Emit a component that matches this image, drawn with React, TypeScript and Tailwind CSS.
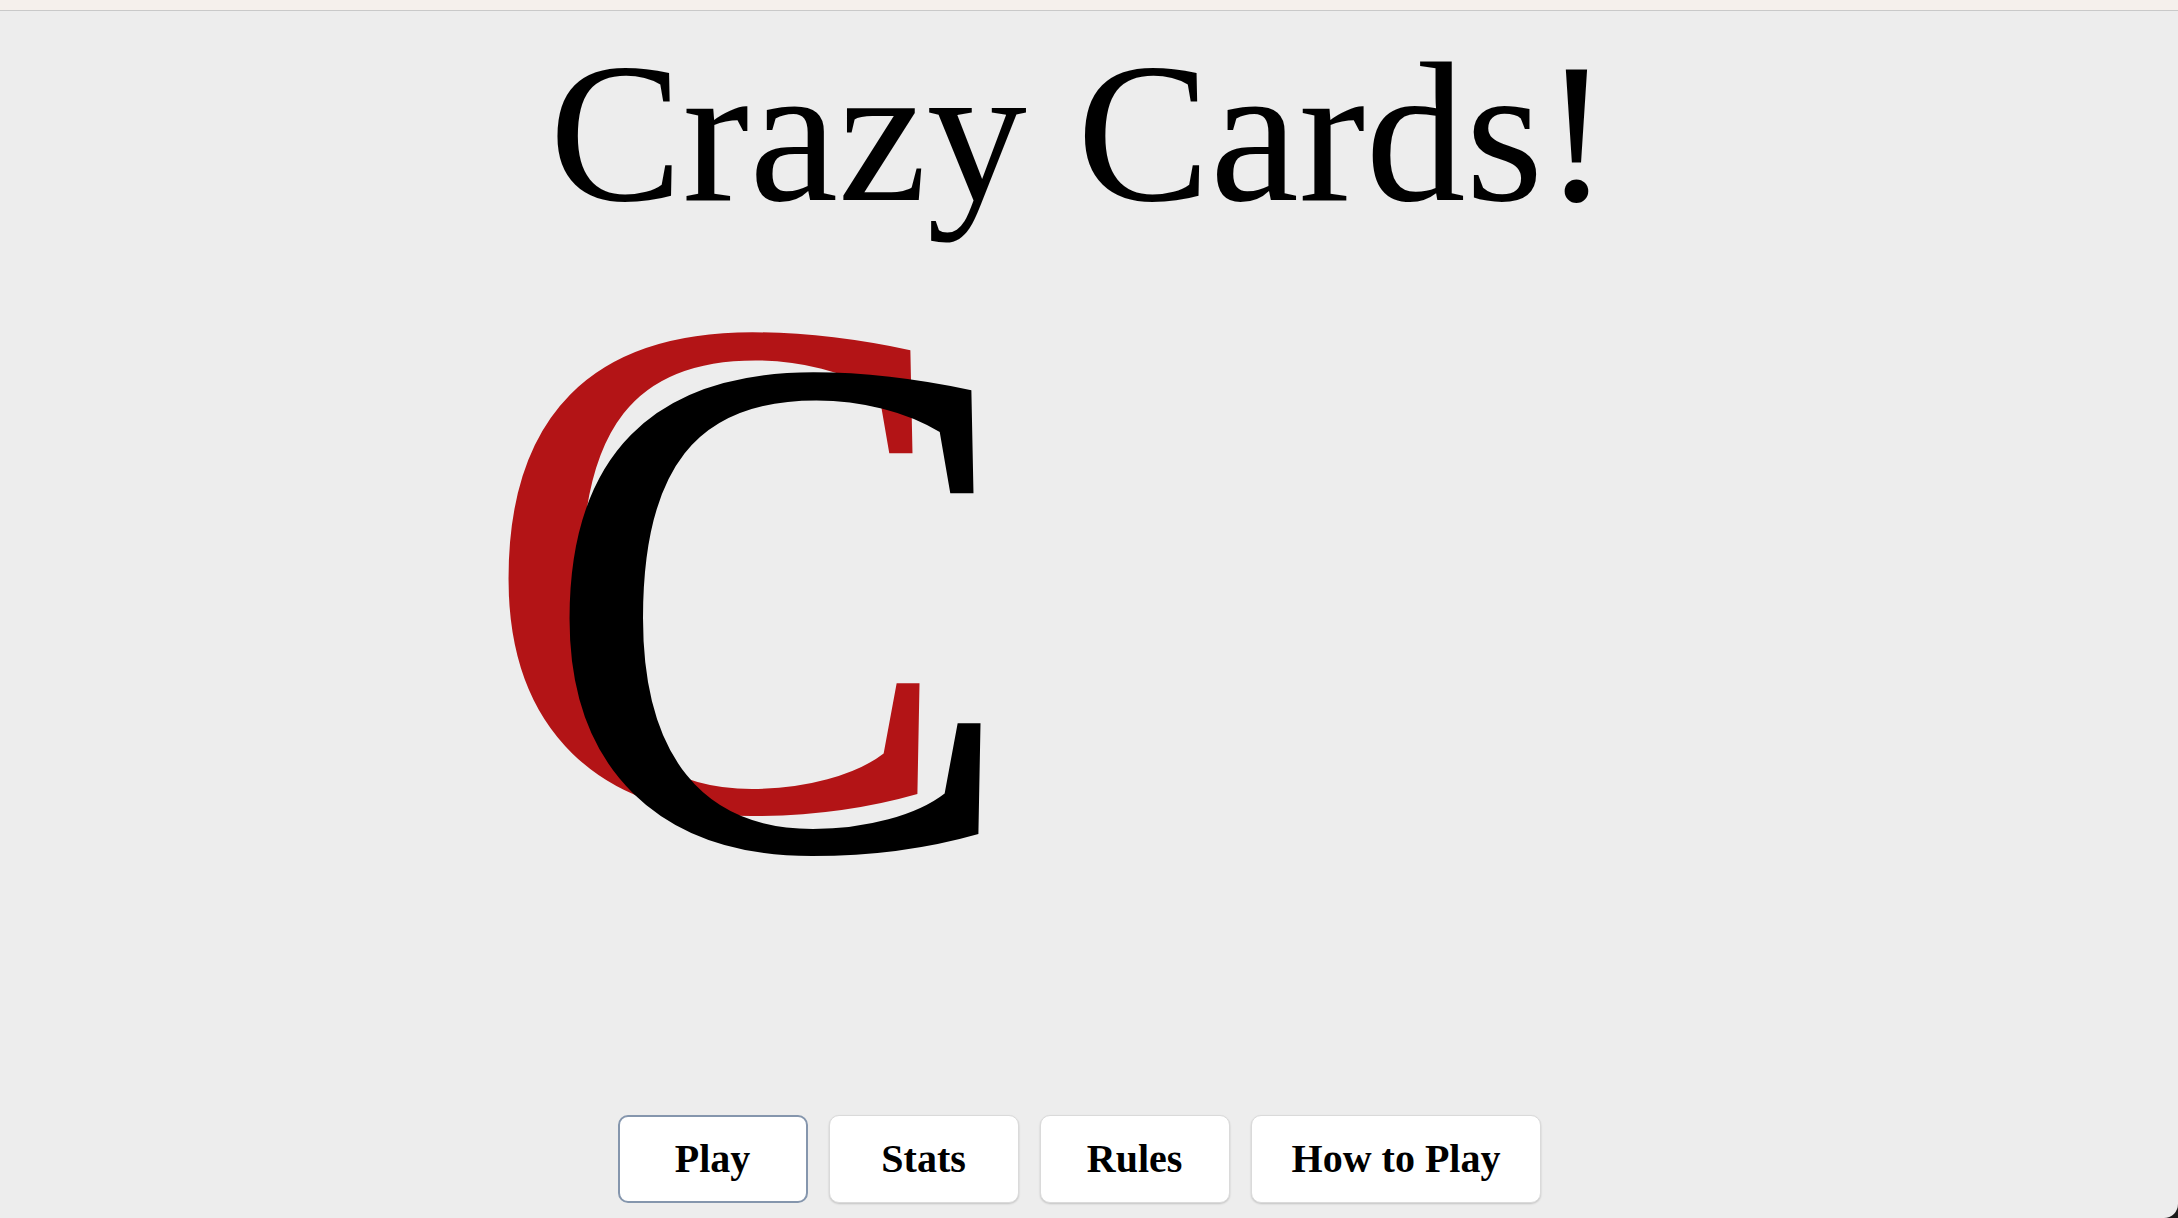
import React from 'react';

const buttons = ['Play', 'Stats', 'Rules', 'How to Play'];

export default function App() {
  return (
    <div
      className="relative flex h-[1218px] w-full flex-col overflow-hidden bg-[#ededed] text-black"
      style={{ fontFamily: '"Liberation Serif", "Times New Roman", serif' }}
    >
      {/* top browser strip */}
      <div className="h-[11px] w-full border-b border-[#c9c9c9] bg-[#f5f0ec]" />

      <div className="flex flex-1 flex-col pr-[19px]">
        {/* title */}
        <h1 className="mt-[22px] text-center text-[200px] font-normal leading-none">Crazy Cards!</h1>

        {/* logo */}
        <div className="relative -mt-[27px] ml-[479px] h-[720px] w-[580px] select-none">
          <span className="block text-[720px] leading-none text-[#b31416]">C</span>
          <span className="absolute left-[61px] top-[40px] block text-[720px] leading-none text-black">C</span>
        </div>

        <div className="flex-1" />

        {/* menu */}
        <div className="flex justify-center gap-[21px] pb-[15px]">
          {buttons.map((label, i) => (
            <button
              key={label}
              className={
                i === 0
                  ? 'flex h-[88px] min-w-[190px] items-center justify-center rounded-[10px] border-2 border-[#8596ad] bg-white px-[40px] text-[40px] font-bold leading-none'
                  : 'flex h-[88px] min-w-[190px] items-center justify-center rounded-[10px] border border-[#dadada] bg-white px-[40px] text-[40px] font-bold leading-none shadow-[0_1px_2px_rgba(0,0,0,0.18)]'
              }
            >
              {label}
            </button>
          ))}
        </div>
      </div>

      {/* window corner */}
      <div className="absolute bottom-0 right-0 h-[14px] w-[14px] bg-[#1a1a1a]">
        <div className="h-full w-full rounded-br-[14px] bg-[#ededed]" />
      </div>
    </div>
  );
}
